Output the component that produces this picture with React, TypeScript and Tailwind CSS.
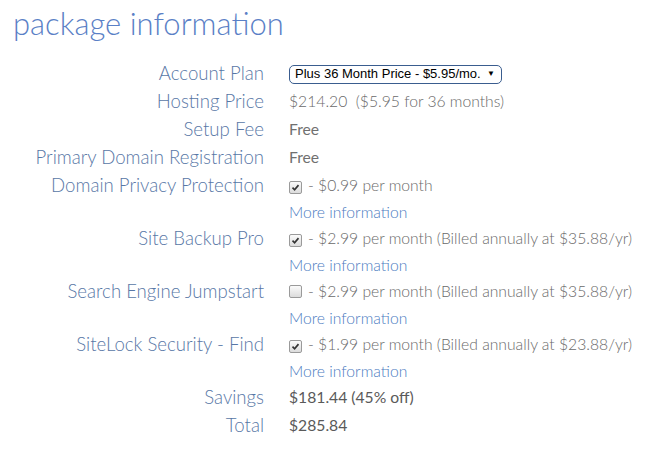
import type { ReactNode } from "react";

type Row = { label: string; value: ReactNode; more?: boolean };

function Check({ checked }: { checked: boolean }) {
  return (
    <span className="mr-[6px] inline-flex h-[13px] w-[13px] items-center justify-center rounded-[2px] border border-[#9a9a9a] bg-gradient-to-b from-[#fbfbfb] to-[#dcdcdc] align-[-1px]">
      {checked && (
        <svg viewBox="0 0 12 12" className="h-[9px] w-[9px]">
          <path d="M2 6.2 L4.8 9 L10 2.8" fill="none" stroke="#333" strokeWidth="2.2" />
        </svg>
      )}
    </span>
  );
}

const rows: Row[] = [
  {
    label: "Account Plan",
    value: (
      <span className="inline-flex h-[19px] w-[213px] items-center justify-between rounded-[5px] border border-[#3a5d8f] bg-white pl-[5px] pr-[6px] font-['Liberation_Sans',Arial,sans-serif] text-[13px] font-normal text-black">
        Plus 36 Month Price - $5.95/mo.
        <span className="text-[8px]">▼</span>
      </span>
    ),
  },
  { label: "Hosting Price", value: <span className="font-light">$214.20&nbsp; ($5.95 for 36 months)</span> },
  { label: "Setup Fee", value: <span className="text-[#707070]">Free</span> },
  { label: "Primary Domain Registration", value: <span className="text-[#707070]">Free</span> },
  {
    label: "Domain Privacy Protection",
    value: (
      <span className="font-light">
        <Check checked />- $0.99 per month
      </span>
    ),
    more: true,
  },
  {
    label: "Site Backup Pro",
    value: (
      <span className="font-light">
        <Check checked />- $2.99 per month (Billed annually at $35.88/yr)
      </span>
    ),
    more: true,
  },
  {
    label: "Search Engine Jumpstart",
    value: (
      <span className="font-light">
        <Check checked={false} />- $2.99 per month (Billed annually at $35.88/yr)
      </span>
    ),
    more: true,
  },
  {
    label: "SiteLock Security - Find",
    value: (
      <span className="font-light">
        <Check checked />- $1.99 per month (Billed annually at $23.88/yr)
      </span>
    ),
    more: true,
  },
  { label: "Savings", value: <span className="text-[#5a5a5a]">$181.44 (45% off)</span> },
  { label: "Total", value: <span className="text-[#5a5a5a]">$285.84</span> },
];

export default function App() {
  return (
    <div className="h-[453px] w-[661px] bg-white font-['Lato',sans-serif]">
      <h1 className="h-[60px] pl-[13px] pt-[1px] text-[31px] font-light leading-[44px] text-[#5a80c6]">
        package information
      </h1>
      <div className="grid grid-cols-[264px_1fr] gap-x-[25px]">
        {rows.map((r) => (
          <>
            <div
              key={r.label}
              className="flex h-[28px] items-center justify-end text-[18.6px] font-light text-[#5877a6]"
            >
              {r.label}
            </div>
            <div className="flex h-[28px] items-center text-[15.7px] text-[#6a6a6a]">{r.value}</div>
            {r.more && (
              <>
                <div className="h-[25px]" />
                <div className="flex h-[25px] items-center text-[15.7px] font-light text-[#4d7cbf]">
                  More information
                </div>
              </>
            )}
          </>
        ))}
      </div>
    </div>
  );
}
